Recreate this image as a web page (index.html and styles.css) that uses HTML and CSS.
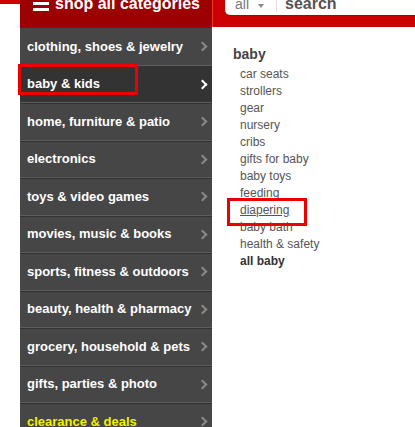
FILE: index.html
```html
<!DOCTYPE html>
<html lang="en">
<head>
    <meta charset="UTF-8">
    <meta name="viewport" content="width=device-width, initial-scale=1.0">
    <title>Shop All Categories</title>
    <link rel="stylesheet" href="styles.css">
</head>
<body>
    <div class="topbar">
        <div class="gutter top-gutter"></div>
        <div class="shop-all">
            <svg class="burger" width="16" height="10" viewBox="0 0 16 10">
                <rect x="0" y="0" width="16" height="3" fill="#fff"/>
                <rect x="0" y="6" width="16" height="3" fill="#fff"/>
            </svg>
            <span class="shop-title">shop all categories</span>
        </div>
        <div class="search-area">
            <div class="search-box">
                <span class="scope">all</span>
                <svg class="caret" width="6" height="4" viewBox="0 0 6 4"><path d="M0 0 L6 0 L3 4 Z" fill="#888"/></svg>
                <span class="divider"></span>
                <span class="search-label">search</span>
            </div>
        </div>
    </div>

    <div class="main">
        <div class="gutter"></div>
        <ul class="menu">
            <li>clothing, shoes &amp; jewelry</li>
            <li class="active">baby &amp; kids</li>
            <li>home, furniture &amp; patio</li>
            <li>electronics</li>
            <li>toys &amp; video games</li>
            <li>movies, music &amp; books</li>
            <li>sports, fitness &amp; outdoors</li>
            <li>beauty, health &amp; pharmacy</li>
            <li>grocery, household &amp; pets</li>
            <li>gifts, parties &amp; photo</li>
            <li class="deals">clearance &amp; deals</li>
        </ul>
        <div class="submenu">
            <h3>baby</h3>
            <ul>
                <li>car seats</li>
                <li>strollers</li>
                <li>gear</li>
                <li>nursery</li>
                <li>cribs</li>
                <li>gifts for baby</li>
                <li>baby toys</li>
                <li>feeding</li>
                <li class="hover">diapering</li>
                <li>baby bath</li>
                <li>health &amp; safety</li>
                <li class="all">all baby</li>
            </ul>
        </div>
    </div>

    <!-- annotation boxes drawn over the screenshot -->
    <div class="mark mark-kids"></div>
    <div class="mark mark-diaper"></div>
</body>
</html>
```

FILE: styles.css
```css
body {
    margin: 0;
    font-family: "Liberation Sans", Arial, sans-serif;
    background: #fff;
    height: 427px;
    overflow: hidden;
    position: relative;
}
.topbar {
    display: flex;
    height: 27px;
    background: #cc0000;
}
.gutter {
    width: 20px;
    flex-shrink: 0;
    background: #fff;
}
.top-gutter {
    border-top: 4px solid #cc0000;
}
.shop-all {
    width: 192px;
    background: #9c0000;
    display: flex;
    align-items: flex-start;
    padding-left: 13px;
    box-sizing: border-box;
    overflow: hidden;
}
.burger {
    margin-top: 2px;
    margin-right: 6px;
}
.shop-title {
    color: #fff;
    font-weight: bold;
    font-size: 16px;
    line-height: 16px;
    margin-top: -4px;
    white-space: nowrap;
}
.search-area {
    flex: 1;
    border-left: 1px solid #ee3a2a;
    padding-left: 12px;
}
.search-box {
    height: 15px;
    background: #fff;
    border-bottom-left-radius: 5px;
    box-shadow: 0 1px 1px #a00;
    display: flex;
    align-items: flex-start;
    padding-left: 10px;
    overflow: hidden;
}
.scope {
    color: #777;
    font-size: 14px;
    line-height: 14px;
    margin-top: -3px;
}
.caret {
    margin: 4px 0 0 9px;
}
.divider {
    width: 1px;
    height: 12px;
    background: #ddd;
    margin-left: 12px;
}
.search-label {
    color: #555;
    font-weight: bold;
    font-size: 16px;
    line-height: 16px;
    margin: -4px 0 0 8px;
}
.main {
    display: flex;
}
.menu {
    list-style: none;
    margin: 0;
    padding: 0;
    width: 192px;
    flex-shrink: 0;
    background: #464646;
}
.menu li {
    height: 36.5px;
    border-top: 1px solid #5d5d5d;
    box-shadow: inset 0 1px 0 #333;
    box-sizing: content-box;
    padding-left: 7px;
    color: #fff;
    font-weight: bold;
    font-size: 13px;
    display: flex;
    align-items: center;
    position: relative;
    white-space: nowrap;
}
.menu li:first-child {
    border-top-color: #333;
    box-shadow: none;
}
.menu li::after {
    content: "";
    position: absolute;
    right: 6px;
    top: 50%;
    margin-top: -3px;
    width: 5px;
    height: 5px;
    border-top: 2px solid #888;
    border-right: 2px solid #888;
    transform: rotate(45deg);
}
.menu li.active {
    background: #333;
}
.menu li.active::after {
    border-color: #fff;
}
.menu li.deals {
    color: #f2f200;
}
.submenu {
    padding: 18px 0 0 21px;
}
.submenu h3 {
    margin: 0 0 3px;
    font-size: 14px;
    color: #444;
    line-height: 18px;
}
.submenu ul {
    list-style: none;
    margin: 0;
    padding: 0 0 0 7px;
}
.submenu li {
    font-size: 12px;
    line-height: 17px;
    color: #555;
}
.submenu li.hover {
    text-decoration: underline;
}
.submenu li.all {
    font-weight: bold;
    color: #333;
}
.mark {
    position: absolute;
    border: 3px solid #ee0000;
    box-sizing: border-box;
}
.mark-kids {
    left: 18px;
    top: 64px;
    width: 120px;
    height: 31px;
}
.mark-diaper {
    left: 227px;
    top: 198px;
    width: 80px;
    height: 28px;
}
```
